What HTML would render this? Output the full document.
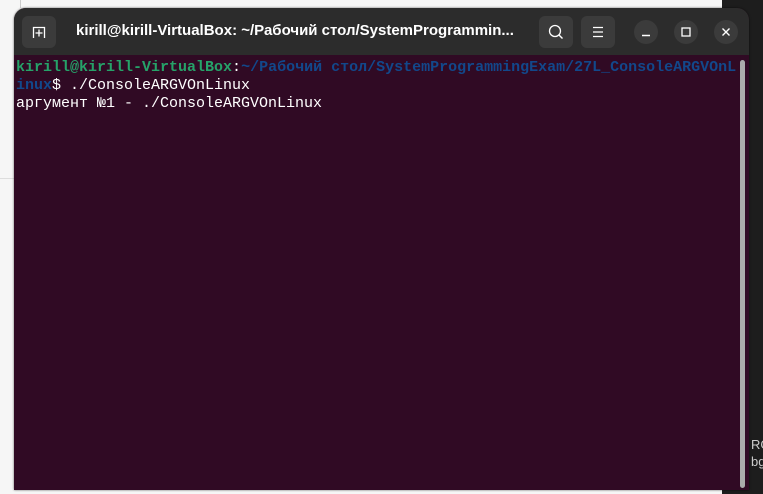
<!DOCTYPE html>
<html><head><meta charset="utf-8"><style>
*{margin:0;padding:0;box-sizing:border-box}
body{width:763px;height:494px;overflow:hidden;background:#f6f6f6;position:relative;font-family:"Liberation Sans",sans-serif}
.rdark{position:absolute;left:722px;top:0;width:41px;height:494px;background:#1d1d1d}
.side{position:absolute;left:751px;top:436px;color:#ccc;font-size:13px;line-height:17px}
.vline{position:absolute;left:20px;top:0;width:1px;height:8px;background:#ccc}
.hline{position:absolute;left:0;top:178px;width:14px;height:1px;background:#ddd}
.win{position:absolute;left:14px;top:8px;width:735px;height:482px;background:#300a24;border-radius:12px 12px 0 0;overflow:hidden;box-shadow:0 0 2px rgba(0,0,0,.6)}
.tb{position:absolute;left:0;top:0;width:735px;height:47px;background:#2c2c2c}
.btn{position:absolute;top:8px;width:34px;height:32px;background:#3b3b3b;border-radius:6px}
.circ{position:absolute;top:12px;width:24px;height:24px;border-radius:50%;background:#3b3b3b}
.title{position:absolute;left:62px;top:14px;color:#fff;font-weight:bold;font-size:15px}
.term{position:absolute;left:2px;top:51px;font-family:"Liberation Mono","DejaVu Sans Mono",monospace;font-size:15px;line-height:18px;color:#fff;white-space:pre}
.g{color:#26a269;font-weight:bold}.b{color:#12488b;font-weight:bold}
.sb{position:absolute;left:726px;top:52px;width:5px;height:428px;background:#ababab;border-radius:3px}
</style></head><body>
<div class="vline"></div><div class="hline"></div>
<div class="rdark"></div>
<div class="side">RG<br>bg</div>
<div class="win">
 <div class="tb">
  <div class="btn" style="left:8px"><svg width="34" height="32"><path d="M11.5 22V11.5h11V22" fill="none" stroke="#fff" stroke-width="1.3"/><path d="M17 13.5v7M13.5 17h7" stroke="#fff" stroke-width="1.3"/></svg></div>
  <div class="title">kirill@kirill-VirtualBox: ~/Рабочий стол/SystemProgrammin...</div>
  <div class="btn" style="left:525px"><svg width="34" height="32"><circle cx="16" cy="15" r="5.5" fill="none" stroke="#fff" stroke-width="1.3"/><path d="M20 19l3.5 3.5" stroke="#fff" stroke-width="1.4"/></svg></div>
  <div class="btn" style="left:567px"><svg width="34" height="32"><path d="M12 11.5h10M12 16h10M12 20.5h10" stroke="#fff" stroke-width="1.2"/></svg></div>
  <div class="circ" style="left:620px"><svg width="24" height="24"><path d="M8 15.5h8" stroke="#fff" stroke-width="1.4"/></svg></div>
  <div class="circ" style="left:660px"><svg width="24" height="24"><rect x="8" y="8" width="8" height="8" fill="none" stroke="#fff" stroke-width="1.3"/></svg></div>
  <div class="circ" style="left:700px"><svg width="24" height="24"><path d="M8.5 8.5l7 7M15.5 8.5l-7 7" stroke="#fff" stroke-width="1.4"/></svg></div>
 </div>
 <div class="term"><span class="g">kirill@kirill-VirtualBox</span>:<span class="b">~/Рабочий стол/SystemProgrammingExam/27L_ConsoleARGVOnL
inux</span>$ ./ConsoleARGVOnLinux
аргумент №1 - ./ConsoleARGVOnLinux</div>
 <div class="sb"></div>
</div>
</body></html>
